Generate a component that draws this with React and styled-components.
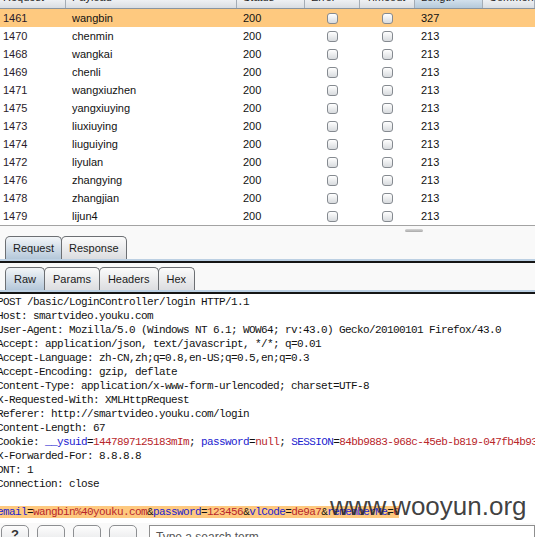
import React from 'react'
import styled, { createGlobalStyle } from 'styled-components'

const columns = '66px 171px 68px 55px 55px 68px 1fr'

const headers = ['Request', 'Payload', 'Status', 'Error', 'Timeout', 'Length', 'Comment']

const results = [
	['1461', 'wangbin', '327'],
	['1470', 'chenmin', '213'],
	['1468', 'wangkai', '213'],
	['1469', 'chenli', '213'],
	['1471', 'wangxiuzhen', '213'],
	['1475', 'yangxiuying', '213'],
	['1473', 'liuxiuying', '213'],
	['1474', 'liuguiying', '213'],
	['1472', 'liyulan', '213'],
	['1476', 'zhangying', '213'],
	['1478', 'zhangjian', '213'],
	['1479', 'lijun4', '213'],
]

// each line is a list of [kind, text] pieces: p = plain, n = param name, v = param value
const request = [
	[['p', 'POST /basic/LoginController/login HTTP/1.1']],
	[['p', 'Host: smartvideo.youku.com']],
	[['p', 'User-Agent: Mozilla/5.0 (Windows NT 6.1; WOW64; rv:43.0) Gecko/20100101 Firefox/43.0']],
	[['p', 'Accept: application/json, text/javascript, */*; q=0.01']],
	[['p', 'Accept-Language: zh-CN,zh;q=0.8,en-US;q=0.5,en;q=0.3']],
	[['p', 'Accept-Encoding: gzip, deflate']],
	[['p', 'Content-Type: application/x-www-form-urlencoded; charset=UTF-8']],
	[['p', 'X-Requested-With: XMLHttpRequest']],
	[['p', 'Referer: http://smartvideo.youku.com/login']],
	[['p', 'Content-Length: 67']],
	[['p', 'Cookie: '], ['n', '__ysuid'], ['p', '='], ['v', '1447897125183mIm'], ['p', '; '], ['n', 'password'], ['p', '='], ['v', 'null'], ['p', '; '], ['n', 'SESSION'], ['p', '='], ['v', '84bb9883-968c-45eb-b819-047fb4b93e2f']],
	[['p', 'X-Forwarded-For: 8.8.8.8']],
	[['p', 'DNT: 1']],
	[['p', 'Connection: close']],
	[['p', ' ']],
]

const body = [['n', 'email'], ['p', '='], ['v', 'wangbin%40youku.com'], ['p', '&'], ['n', 'password'], ['p', '='], ['v', '123456'], ['p', '&'], ['n', 'vlCode'], ['p', '='], ['v', 'de9a7'], ['p', '&'], ['n', 'rememberMe'], ['p', '='], ['v', '0']]

function Pieces({ parts }) {
	return parts.map(([kind, text], i) => <Piece key={i} $kind={kind}>{text}</Piece>)
}

export default function App() {
	return (
		<>
			<GlobalStyle />
			<Page>
				<Table>
					<HeaderRow>
						{headers.map((h) => (
							<HeaderCell key={h} $sorted={h === 'Length'}><span>{h}</span></HeaderCell>
						))}
					</HeaderRow>
					{results.map(([id, payload, length], i) => (
						<Row key={id} $selected={i === 0}>
							<Cell>{id}</Cell>
							<Cell>{payload}</Cell>
							<Cell>200</Cell>
							<Cell $center><Check /></Cell>
							<Cell $center><Check /></Cell>
							<Cell>{length}</Cell>
							<Cell />
						</Row>
					))}
				</Table>
				<Splitter><Grip /></Splitter>
				<TabBar>
					<Tab $active>Request</Tab>
					<Tab>Response</Tab>
				</TabBar>
				<Rule />
				<TabBar $sub>
					<Tab $active $wide>Raw</Tab>
					<Tab $wide>Params</Tab>
					<Tab $wide>Headers</Tab>
					<Tab $wide>Hex</Tab>
				</TabBar>
				<Rule />
				<Editor>
					{request.map((line, i) => (
						<Line key={i}><Pieces parts={line} /></Line>
					))}
					<Line><Selection><Pieces parts={body} /></Selection></Line>
					<Watermark>www.wooyun.org</Watermark>
				</Editor>
				<Toolbar>
					<ToolButton>?</ToolButton>
					<ToolButton />
					<ToolButton />
					<ToolButton />
					<Search>Type a search term</Search>
				</Toolbar>
			</Page>
		</>
	)
}

const GlobalStyle = createGlobalStyle`
	html, body {
		margin: 0;
		background: #f9f9f9;
		overflow: hidden;
	}
`
const Page = styled.div`
	display: flex;
	flex-direction: column;
	width: 535px;
	height: 537px;
	overflow: hidden;
	font-family: "Liberation Sans", Arial, sans-serif;
	font-size: 11px;
	color: #111;
`
const Table = styled.div`
	background: #fff;
	border-bottom: 1px solid #a3a3a3;
`
const HeaderRow = styled.div`
	display: grid;
	grid-template-columns: ${columns};
	height: 8px;
	border-bottom: 1px solid #8a949e;
	background: linear-gradient(#eef0f3, #d9dde2);
	overflow: hidden;
`
const HeaderCell = styled.div`
	display: flex;
	align-items: flex-end;
	padding: 0 0 4px 6px;
	border-right: 1px solid #a4acb5;
	background: ${(p) => (p.$sorted ? 'linear-gradient(#d2e0ec, #b5c9da)' : 'transparent')};
	color: #222;
	line-height: 13px;
	white-space: nowrap;
	overflow: hidden;

	&:first-child {
		padding-left: 3px;
	}
`
const Row = styled.div`
	display: grid;
	grid-template-columns: ${columns};
	height: 18px;
	align-items: center;
	background: ${(p) => (p.$selected ? '#fec97f' : '#fff')};
`
const Cell = styled.div`
	display: flex;
	align-items: center;
	justify-content: ${(p) => (p.$center ? 'center' : 'flex-start')};
	padding-left: ${(p) => (p.$center ? '0' : '6px')};
	white-space: nowrap;

	&:first-child {
		padding-left: 3px;
		color: #2a1a2a;
	}
`
const Check = styled.span`
	display: block;
	width: 9px;
	height: 9px;
	border: 1px solid #858a90;
	border-radius: 3px;
	background: linear-gradient(#ffffff, #d8dbde);
`
const Splitter = styled.div`
	display: flex;
	justify-content: flex-end;
	height: 10px;
	padding: 3px 112px 0 0;
	box-sizing: border-box;
`
const Grip = styled.span`
	display: block;
	width: 18px;
	height: 3px;
	border-radius: 2px;
	background: linear-gradient(#d6d6d6, #a9a9a9);
`
const TabBar = styled.div`
	display: flex;
	align-items: flex-end;
	height: 23px;
	margin-top: ${(p) => (p.$sub ? '4px' : '0')};
	padding-left: 5px;
`
const Tab = styled.div`
	display: flex;
	align-items: center;
	height: 22px;
	padding: 0 ${(p) => (p.$wide ? '8px' : '7px')};
	border: 1px solid #6c6f73;
	border-bottom: none;
	border-radius: 5px 5px 0 0;
	background: ${(p) => (p.$active ? 'linear-gradient(#f2f5f8, #b4c7d9)' : 'linear-gradient(#fbfbfb, #dcdde0)')};
	color: #1a1a1a;
	font-size: 11px;

	& + & {
		margin-left: -1px;
	}
`
const Rule = styled.div`
	height: 2px;
	background: #bcd0e3;
	border-bottom: 2px solid #151515;
`
const Editor = styled.div`
	position: relative;
	flex: 1;
	background: #fff;
	padding-top: 1px;
	overflow: hidden;
	font-family: "Liberation Mono", "Courier New", monospace;
	font-size: 11px;
	letter-spacing: -0.6px;
	line-height: 14px;
	color: #111;
`
const Line = styled.div`
	margin-left: -3px;
	white-space: pre;
`
const Selection = styled.span`
	background: #fec97f;
`
const Piece = styled.span`
	color: ${(p) => (p.$kind === 'n' ? '#1b22cf' : p.$kind === 'v' ? '#b8262b' : '#111')};
`
const Watermark = styled.div`
	position: absolute;
	left: 330px;
	top: 197px;
	font-family: "Liberation Sans", Arial, sans-serif;
	font-size: 26px;
	letter-spacing: 0;
	line-height: 30px;
	color: rgba(40, 40, 40, 0.88);
`
const Toolbar = styled.div`
	display: flex;
	align-items: flex-start;
	gap: 8px;
	height: 12px;
	padding: 2px 0 0 1px;
	overflow: hidden;
`
const ToolButton = styled.div`
	display: flex;
	justify-content: center;
	width: 26px;
	height: 20px;
	flex-shrink: 0;
	border: 1px solid #8d8f92;
	border-radius: 5px;
	background: linear-gradient(#fdfdfd, #e2e3e5);
	font-size: 13px;
	font-weight: bold;
	color: #333;
	line-height: 18px;
`
const Search = styled.div`
	flex: 1;
	height: 20px;
	margin-left: 4px;
	padding: 4px 0 0 6px;
	border: 1px solid #8f8f8f;
	background: #fff;
	color: #555;
	font-size: 12px;
`
